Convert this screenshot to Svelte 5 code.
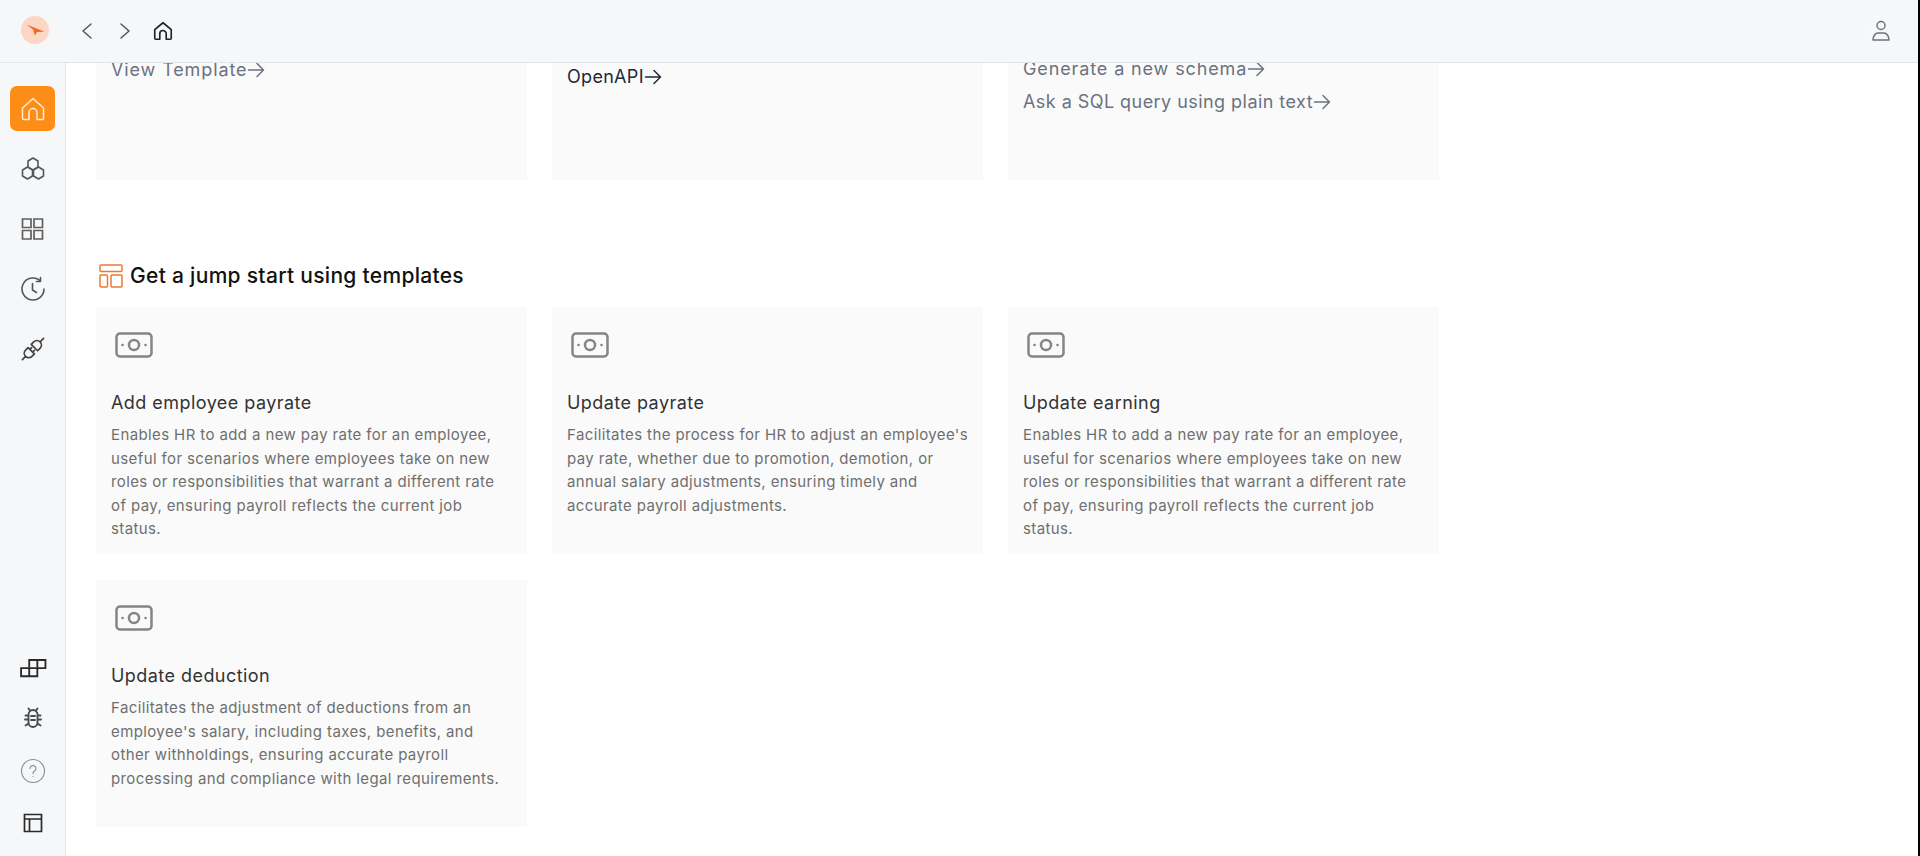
<script>
  const railTop = [
    { id: 'home', active: true },
    { id: 'hex' },
    { id: 'grid' },
    { id: 'history' },
    { id: 'plug' }
  ];
  const railBottom = ['blocks', 'bug', 'help', 'layout'];
  const links = [
    { cls: 'tpl', items: [{ text: 'View Template', k: 'wide' }] },
    { cls: 'api', items: [{ text: 'OpenAPI', k: '' }] },
    { cls: 'gen', items: [{ text: 'Generate a new schema', k: 'wide' }, { text: 'Ask a SQL query using plain text', k: 'mid' }] }
  ];
  const templates = [
    { title: 'Add employee payrate', lines: ['Enables HR to add a new pay rate for an employee,', 'useful for scenarios where employees take on new', 'roles or responsibilities that warrant a different rate', 'of pay, ensuring payroll reflects the current job', 'status.'] },
    { title: 'Update payrate', lines: ["Facilitates the process for HR to adjust an employee's", "pay rate, whether due to promotion, demotion, or", 'annual salary adjustments, ensuring timely and', 'accurate payroll adjustments.'] },
    { title: 'Update earning', lines: ['Enables HR to add a new pay rate for an employee,', 'useful for scenarios where employees take on new', 'roles or responsibilities that warrant a different rate', 'of pay, ensuring payroll reflects the current job', 'status.'] },
    { title: 'Update deduction', lines: ["Facilitates the adjustment of deductions from an", "employee's salary, including taxes, benefits, and", 'other withholdings, ensuring accurate payroll', 'processing and compliance with legal requirements.'] }
  ];
</script>

{#snippet railIcon(id)}
  <svg class="ri {id}" viewBox="0 0 24 24" fill="none" stroke-linecap="round" stroke-linejoin="round">
    {#if id === 'home'}
      <path d="M1.500 11 12 1.500 22.500 11V21.500a1 1 0 0 1-1 1H16V15.500a4 4 0 0 0-8 0v7H2.500a1 1 0 0 1-1-1z" stroke="#fff" stroke-width="1.500" opacity=".85"/>
    {:else if id === 'hex'}
      <path d="M12 1l5 3v6l-5 3-5-3V4zM6.500 10l5 3v6l-5 3-5-3v-6zM17.500 10l5 3v6l-5 3-5-3v-6z" stroke="#555" stroke-width="1.600"/>
    {:else if id === 'grid'}
      <path d="M2 2h8.500v8.500H2zM13.500 2H22v8.500h-8.500zM2 13.500h8.500V22H2zM13.500 13.500H22V22h-8.500z" stroke="#5f5f5f" stroke-width="1.700" stroke-linejoin="miter"/>
    {:else if id === 'history'}
      <path d="M23 12A11 11 0 1 1 18.500 3.100M19.500 .5v4h-4M11.500 6.500v6.500l4 2.500" stroke="#555" stroke-width="1.600"/>
    {:else if id === 'plug'}
      <g transform="rotate(-45 12 12)" stroke="#444" stroke-width="1.700">
        <path d="M-3 12h4.500M9.500 7.500v9H6a4.500 4.500 0 0 1 0-9zM9.500 10H12M9.500 14H12M14 7.500v9h3.500a4.500 4.500 0 0 0 0-9zM22 12h5"/>
      </g>
    {:else if id === 'blocks'}
      <path d="M1 14h7.500v7.500H1zM8.500 14H16v7.500H8.500zM8.500 6.500H16V14H8.500zM16 6.500h7.500V14H16z" stroke="#2a2a2a" stroke-width="1.700" stroke-linejoin="miter"/>
    {:else if id === 'bug'}
      <path d="M7.500 8.500a4.500 4.500 0 0 1 9 0v8a4.500 4.500 0 0 1-9 0zM9 4.500 7.500 2.500M15 4.500l1.500-2M7.500 9.500H4.500M7.500 13.500H4M7.500 17.500l-3 2M16.500 9.500h3M16.500 13.500h3.500M16.500 17.500l3 2M10 10h4M10 14h4" stroke="#4a4a4a" stroke-width="1.900"/>
    {:else if id === 'help'}
      <circle cx="12" cy="12" r="11.500" stroke="#8d8d8d" stroke-width="1.100"/>
      <path d="M9 9.500a3 3 0 1 1 4.500 2.600c-1 .6-1.500 1.200-1.500 2.400M12 17.500v.2" stroke="#8d8d8d" stroke-width="1.200"/>
    {:else}
      <path d="M3.500 3.500h17v17h-17zM3.500 8h17M8.500 8v12.500" stroke="#2a2a2a" stroke-width="1.700" stroke-linejoin="miter"/>
    {/if}
  </svg>
{/snippet}

{#snippet arrow()}
  <svg class="arrow" viewBox="0 0 18 18" fill="none" stroke="currentColor" stroke-width="1.500" stroke-linecap="round" stroke-linejoin="round"><path d="M1.500 9h15M10 2.500 16.500 9 10 15.500"/></svg>
{/snippet}

<div class="app">
  <header class="topbar">
    <span class="logo">
      <svg viewBox="0 0 28 28" width="28" height="28"><circle cx="14" cy="14" r="14" fill="#fdd7c6"/><path d="M5.700 8.500 23.500 15.700l-7.500 .2L14 19.500l-2-6z" fill="#f4691f"/></svg>
    </span>
    <nav class="nav">
      <svg class="chev" viewBox="0 0 12 18" fill="none" stroke="#555" stroke-width="1.500" stroke-linecap="round" stroke-linejoin="round"><path d="M10 2 2 9l8 7"/></svg>
      <svg class="chev c2" viewBox="0 0 12 18" fill="none" stroke="#555" stroke-width="1.500" stroke-linecap="round" stroke-linejoin="round"><path d="M2 2l8 7-8 7"/></svg>
      <svg class="homei" viewBox="0 0 24 24" fill="none" stroke="#222" stroke-width="1.800" stroke-linecap="round" stroke-linejoin="round"><path d="M3 10.500 12 3l9 7.500V20a1 1 0 0 1-1 1h-4.500v-6a3.500 3.500 0 0 0-7 0v6H4a1 1 0 0 1-1-1z"/></svg>
    </nav>
    <span class="user">
      <svg viewBox="0 0 24 24" width="24" height="24" fill="none" stroke="#6e7280" stroke-width="1.500" stroke-linecap="round" stroke-linejoin="round"><circle cx="12" cy="6.500" r="4"/><path d="M4 21c0-4 2.500-7 5-7h6c2.500 0 5 3 5 7z"/></svg>
    </span>
  </header>

  <div class="body">
    <aside class="rail">
      <div class="group">
        {#each railTop as item}
          <span class="slot" class:active={item.active}>{@render railIcon(item.id)}</span>
        {/each}
      </div>
      <div class="group bottom">
        {#each railBottom as id}
          <span class="slot">{@render railIcon(id)}</span>
        {/each}
      </div>
    </aside>

    <main class="main">
      <section class="grid first">
        {#each links as card}
          <div class="card link {card.cls}">
            {#each card.items as item}
              <a href="#top" class="lnk {item.k}">{item.text}{@render arrow()}</a>
            {/each}
          </div>
        {/each}
      </section>

      <h2 class="heading">
        <svg viewBox="0 0 24 24" width="24" height="24" fill="none" stroke="#ee7733" stroke-width="1.500" stroke-linejoin="round"><rect x="1" y="1" width="22" height="6.500" rx="1"/><rect x="1" y="11" width="7.500" height="12" rx="1"/><rect x="12" y="11" width="11" height="12" rx="1"/></svg>
        Get a jump start using templates
      </h2>

      <section class="grid rows">
        {#each templates as t}
          <article class="card tpl-card">
            <svg class="cash" viewBox="0 0 38 26" fill="none" stroke="#858585" stroke-width="2.500" stroke-linecap="round"><rect x="1.500" y="1.500" width="35" height="23" rx="3.500"/><circle cx="19" cy="13" r="5"/><path d="M7.500 13h.1M30.500 13h.1"/></svg>
            <h3>{t.title}</h3>
            <p>{#each t.lines as line}<span>{line}</span>{/each}</p>
          </article>
        {/each}
      </section>
    </main>
  </div>
  <div class="edge"></div>
</div>

<style>
  :global(body) { margin: 0; background: #fff; }
  .app { position: relative; width: 1920px; height: 856px; overflow: hidden; display: flex; flex-direction: column; font-family: Inter, "Liberation Sans", sans-serif; }
  .edge { position: absolute; top: 0; right: 0; width: 2px; height: 100%; background: #000; }
  .topbar { height: 63px; box-sizing: border-box; flex: none; display: flex; align-items: center; background: #f6f7f9; border-bottom: 1px solid #e3e4e6; padding: 0 23px 0 21px; }
  .logo { display: flex; width: 28px; height: 28px; margin-top: -3px; }
  .nav { display: flex; align-items: center; margin-left: 32px; margin-top: -1px; }
  .chev { width: 12px; height: 18px; }
  .c2 { margin-left: 26px; }
  .homei { width: 22px; height: 22px; margin-left: 21px; }
  .user { margin-left: auto; width: 30px; height: 30px; border-radius: 50%; border: 1px solid #fbfbfc; display: flex; align-items: center; justify-content: center; margin-top: -1px; }
  .body { flex: 1; display: flex; min-height: 0; }
  .rail { width: 66px; flex: none; background: #f6f7f9; border-right: 1px solid #e3e4e6; display: flex; flex-direction: column; justify-content: space-between; align-items: center; padding: 23px 0 18px; box-sizing: border-box; }
  .group { display: flex; flex-direction: column; align-items: center; gap: 15px; }
  .group.bottom { gap: 22.500px; }
  .slot { width: 45px; height: 45px; border-radius: 7px; display: flex; align-items: center; justify-content: center; }
  .bottom .slot { height: 30px; }
  .slot.active { background: #fd8d17; }
  .ri { width: 24px; height: 24px; overflow: visible; }
  .ri.blocks { width: 26px; height: 26px; }
  .main { flex: 1; min-width: 0; overflow: hidden; padding-left: 30px; }
  .grid { display: grid; grid-template-columns: repeat(3, 431px); column-gap: 25px; width: 1343px; }
  .rows { row-gap: 26px; }
  .card { background: #fafafa; box-sizing: border-box; padding: 0 15px; }
  .link { height: 117px; }
  .lnk { display: flex; align-items: center; font-size: 18px; line-height: 32.700px; color: #6b7280; text-decoration: none; letter-spacing: .3px; }
  .lnk.wide { letter-spacing: .88px; }
  .lnk.mid { letter-spacing: .45px; }
  .tpl .lnk { margin-top: -9px; }
  .api .lnk { color: #1f2937; margin-top: -2px; }
  .gen .lnk:first-child { margin-top: -10px; }
  .arrow { width: 18px; height: 18px; flex: none; }
  .heading { margin: 81px 0 16px 3px; display: flex; align-items: center; gap: 7px; font-size: 21px; line-height: 30px; font-weight: 500; color: #111; letter-spacing: .3px; }
  .tpl-card { height: 247px; padding-top: 25px; }
  .cash { display: block; width: 38px; height: 26px; margin-left: 4px; }
  h3 { margin: 32px 0 0; font-size: 18px; line-height: 26px; font-weight: 400; color: #333; letter-spacing: .45px; }
  p { margin: 7px 0 0; font-size: 15px; line-height: 23.600px; color: #6f6f6f; letter-spacing: .39px; }
  p span { display: block; white-space: nowrap; }
</style>
